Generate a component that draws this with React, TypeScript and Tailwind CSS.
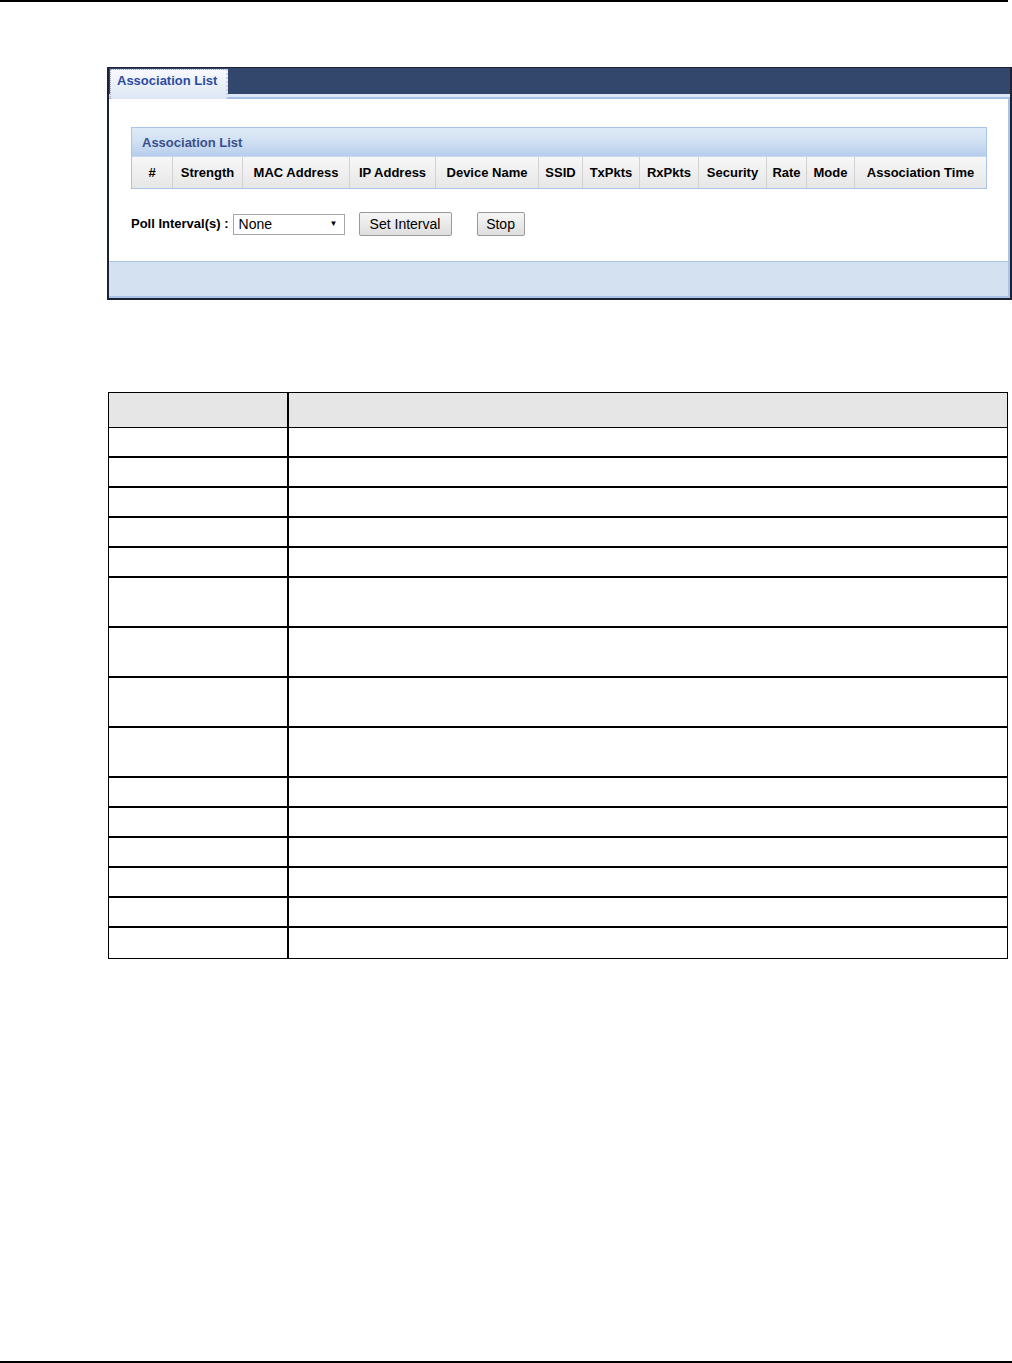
const columns = [
  { label: "#", w: "w-[40px]" },
  { label: "Strength", w: "w-[70px]" },
  { label: "MAC Address", w: "w-[107px]" },
  { label: "IP Address", w: "w-[86px]" },
  { label: "Device Name", w: "w-[103px]" },
  { label: "SSID", w: "w-[44px]" },
  { label: "TxPkts", w: "w-[57px]" },
  { label: "RxPkts", w: "w-[59px]" },
  { label: "Security", w: "w-[68px]" },
  { label: "Rate", w: "w-[40px]" },
  { label: "Mode", w: "w-[48px]" },
  { label: "Association Time", w: "flex-1" },
];

// row heights of the empty description table below the screenshot
const rows = [30, 30, 30, 30, 30, 50, 50, 50, 50, 30, 30, 30, 30, 30, 30];

function ScreenPanel() {
  return (
    <div className="ml-[107px] mt-[65px] w-[905px] h-[233px] border-t border-l-2 border-r-2 border-b-2 border-[#1c2233] flex flex-col">
      {/* Tab bar */}
      <div className="h-[26px] bg-[#33466b] flex items-end pl-px">
        <div className="h-[30px] w-[118px] mb-[-5px] relative z-10 border-t border-l border-dotted border-[#9aa5b8] border-r-2 border-r-[#c9d3e2] bg-linear-to-b from-[#f7f9fd] to-[#dde7f5] flex items-start pt-[4px] pl-[6px]">
          <span className="text-[13px] font-bold text-[#2c4c9e] leading-none">Association List</span>
        </div>
      </div>
      <div className="h-[3px] bg-[#dde8f6]" />
      <div className="h-[2px] bg-[#a6c1e7]" />

      {/* Content */}
      <div className="h-[162px] bg-white border-r-2 border-[#a9c3e8] flex flex-col pl-[22px] pt-[28px]">
        <div className="w-[856px] border border-[#a9c4e8] flex flex-col">
          <div className="h-[29px] bg-linear-to-b from-[#dfeaf7] via-[#d0e0f3] to-[#b7cdec] border-b border-[#c6d7ee] flex items-center pl-[10px] pt-[1px]">
            <span className="text-[13px] font-bold text-[#3b4f8e]">Association List</span>
          </div>
          <div className="h-[31px] flex bg-linear-to-b from-[#f7f7f7] to-[#e7e7e7]">
            {columns.map((c, i) => (
              <div
                key={c.label}
                className={`${c.w} h-full flex items-center justify-center text-[13px] font-bold text-black whitespace-nowrap ${i > 0 ? "border-l border-[#d2d2d2]" : ""}`}
              >
                {c.label}
              </div>
            ))}
          </div>
        </div>

        <div className="flex items-center mt-[23px] h-[24px]">
          <span className="text-[13px] font-bold text-black">Poll Interval(s) :</span>
          <div className="ml-[4px] w-[112px] h-[21px] border border-[#a6a6a6] bg-white flex items-center justify-between pl-[5px] pr-[6px]">
            <span className="text-[14px] text-black leading-none">None</span>
            <span className="text-[8px] text-black leading-none">▼</span>
          </div>
          <button className="ml-[14px] w-[93px] h-[24px] border border-[#9a9a9a] rounded-[2px] bg-linear-to-b from-[#f6f6f6] to-[#dedede] text-[14px] text-black leading-none">
            Set Interval
          </button>
          <button className="ml-[25px] w-[48px] h-[24px] border border-[#9a9a9a] rounded-[2px] bg-linear-to-b from-[#f6f6f6] to-[#dedede] text-[14px] text-black leading-none">
            Stop
          </button>
        </div>
      </div>

      {/* Footer band */}
      <div className="flex-1 bg-[#d4e1f1] border-t border-[#abc6e9] border-r-2 border-r-[#a9c3e8] border-b-2 border-b-[#a9c3e8]" />
    </div>
  );
}

export default function App() {
  return (
    <div className="w-[1012px] h-[1363px] bg-white flex flex-col font-['Liberation_Sans',Arial,sans-serif]">
      <div className="h-[2px] w-[1008px] bg-black" />
      <ScreenPanel />

      <div className="ml-[108px] mt-[92px] w-[900px] border border-black flex flex-col">
        <div className="h-[35px] flex bg-[#e6e6e6] border-b border-black">
          <div className="w-[180px] border-r-2 border-black" />
          <div className="flex-1" />
        </div>
        {rows.map((h, i) => (
          <div
            key={i}
            className={`flex ${i < rows.length - 1 ? "border-b-2 border-black" : ""} ${h === 50 ? "h-[50px]" : "h-[30px]"}`}
          >
            <div className="w-[180px] border-r-2 border-black" />
            <div className="flex-1" />
          </div>
        ))}
      </div>

      <div className="flex-1" />
      <div className="h-[2px] w-full bg-black" />
    </div>
  );
}
